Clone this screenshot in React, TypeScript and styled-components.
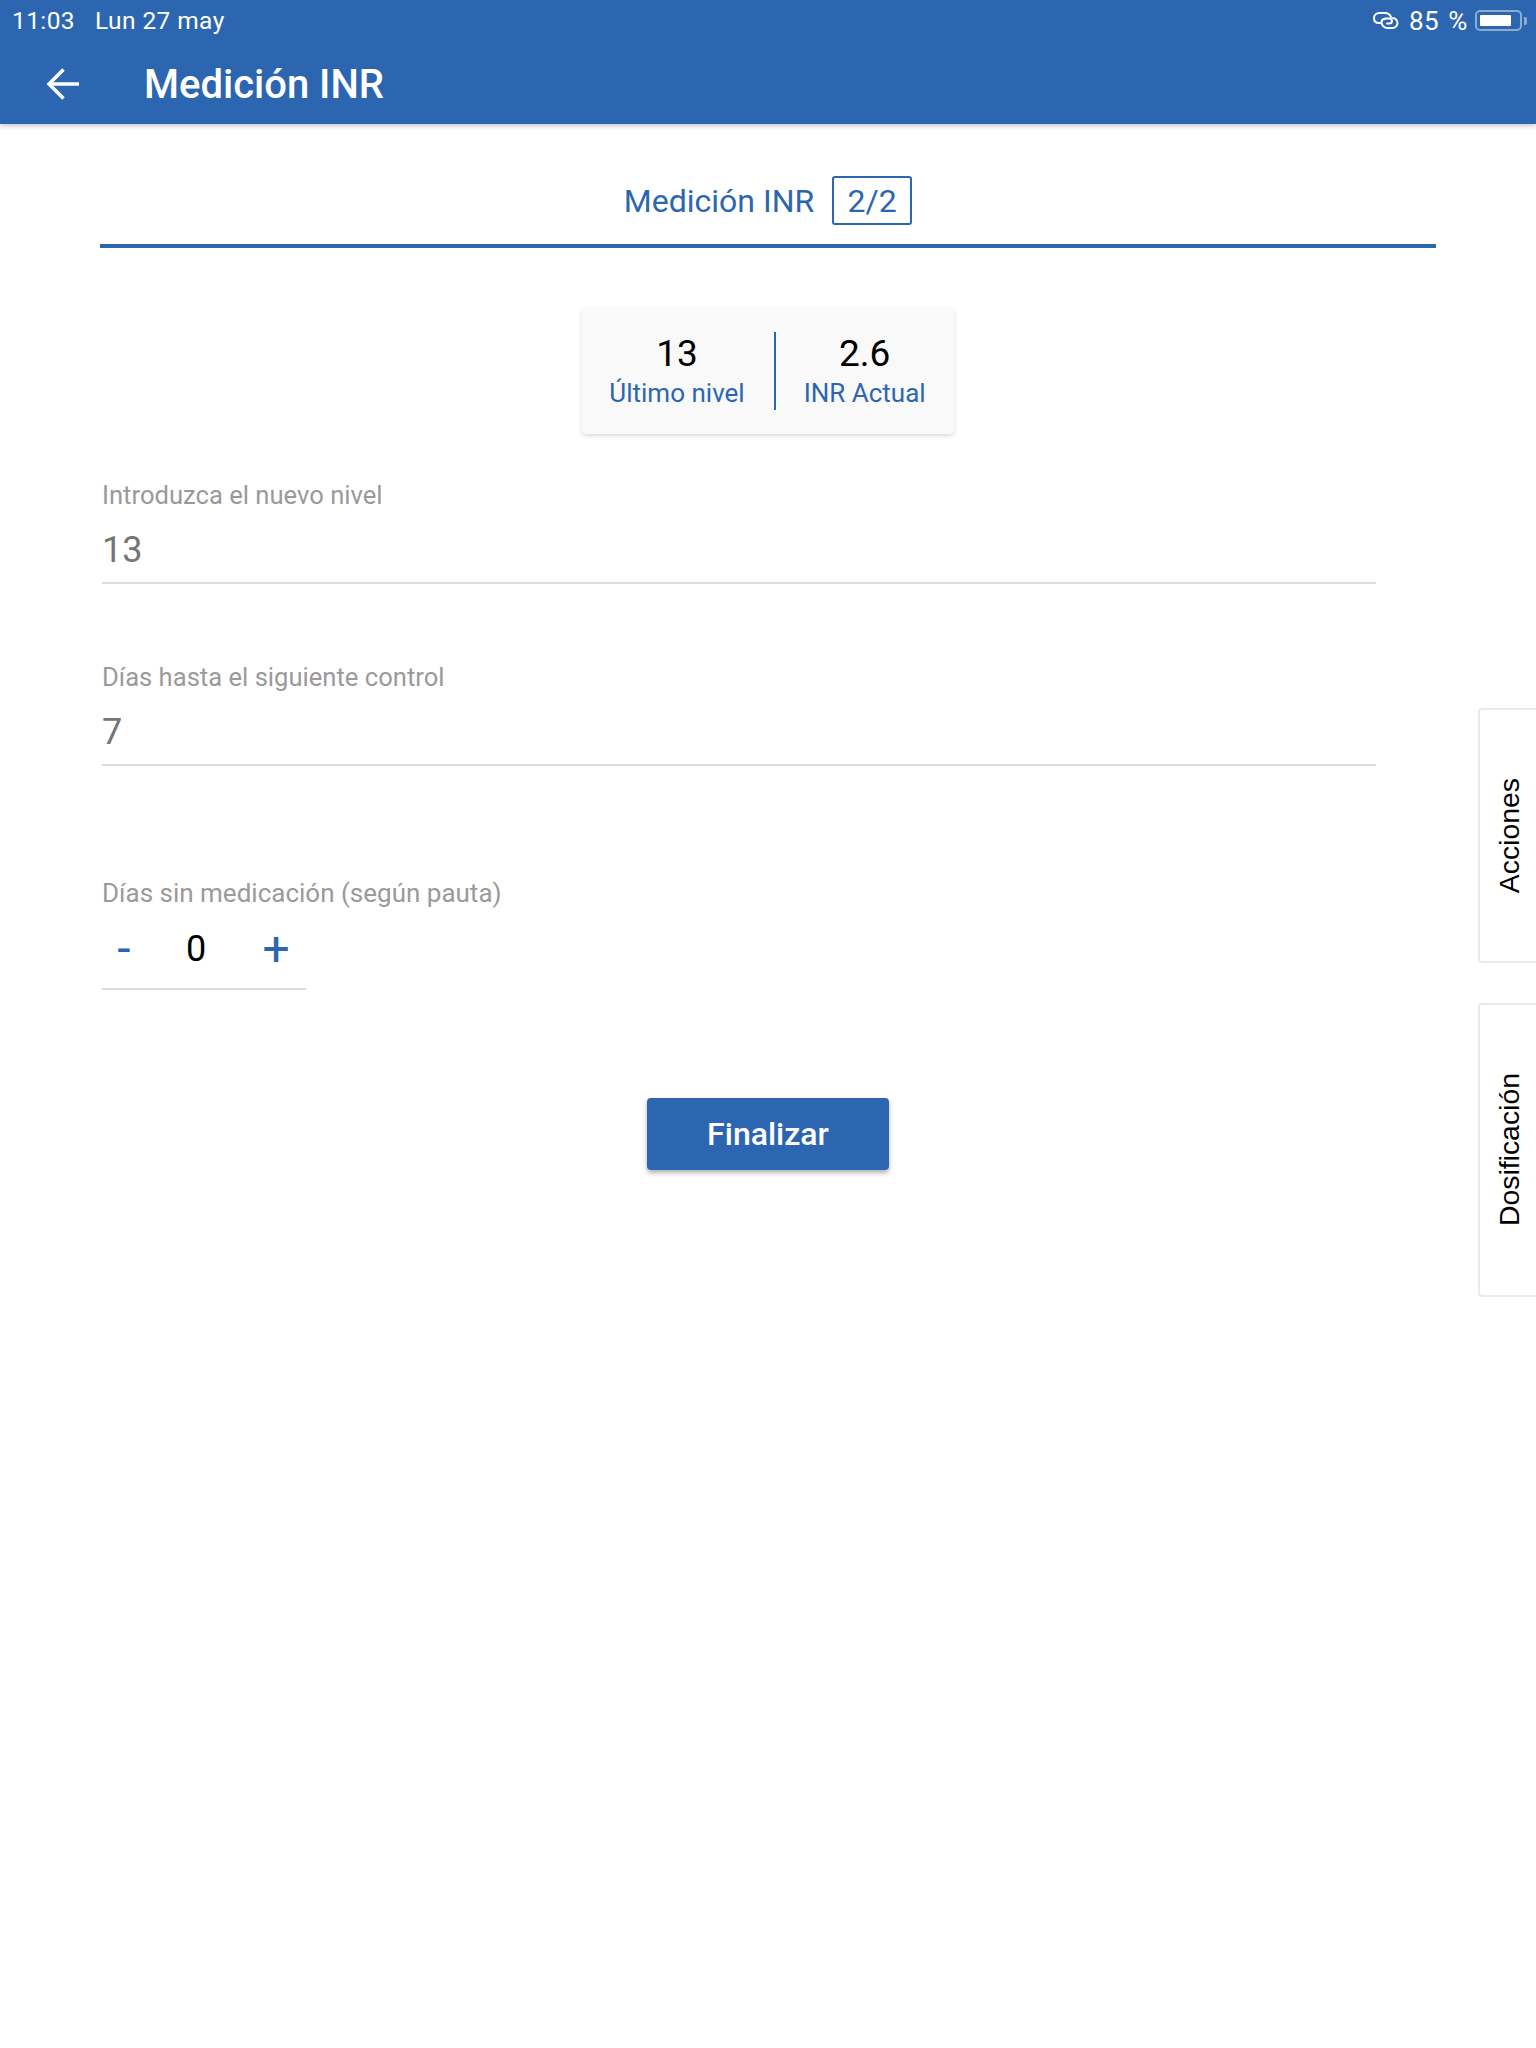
import styled, { createGlobalStyle } from 'styled-components';

const BLUE = '#2d66b0';

const GlobalStyle = createGlobalStyle`
  html, body {
    margin: 0;
    padding: 0;
    background: #fff;
    font-family: Roboto, "Liberation Sans", sans-serif;
  }
`

function StatusIcons() {
  return (
    <svg width="28" height="22" viewBox="0 0 28 22" fill="none" stroke="#fff" strokeWidth="2" strokeLinecap="round">
      <path d="M9 13H7C4 13 2 11 2 8s2.500-5 5-5h6c3 0 5 1.500 6 4" />
      <path d="M13 9c-2 0-3.500 1-3.500 3 0 3 2.500 6 6 6h5c3 0 5-2.500 5-5s-2-5-4.500-5" />
      <path d="M13 8.500h4c2 0 3 1 3 2.500s-1 2.500-3 2.500h-2" />
    </svg>
  )
}

function Battery() {
  return (
    <BatteryWrap>
      <BatteryBody><BatteryLevel style={{ width: '85%' }} /></BatteryBody>
      <BatteryTip />
    </BatteryWrap>
  )
}

export default function App() {
  return (
    <>
      <GlobalStyle />
      <Page>
        <Header>
          <StatusBar>
            <StatusGroup>
              <span>11:03</span>
              <span>Lun 27 may</span>
            </StatusGroup>
            <StatusRight>
              <StatusIcons />
              <span>85 %</span>
              <Battery />
            </StatusRight>
          </StatusBar>
          <TitleBar>
            <svg width="36" height="36" viewBox="0 0 36 36" fill="none" stroke="#fff" strokeWidth="3.500">
              <path d="M34 18H4" />
              <path d="M18.500 3.500 4 18l14.500 14.500" />
            </svg>
            <Title>Medición INR</Title>
          </TitleBar>
        </Header>

        <Content>
          <StepHeading>
            <StepTitle>Medición INR</StepTitle>
            <StepBadge>2/2</StepBadge>
          </StepHeading>

          <StatsCard>
            <Stat>
              <StatValue>13</StatValue>
              <StatLabel>Último nivel</StatLabel>
            </Stat>
            <StatDivider />
            <Stat>
              <StatValue>2.6</StatValue>
              <StatLabel>INR Actual</StatLabel>
            </Stat>
          </StatsCard>

          <Form>
            <Field>
              <FieldLabel>Introduzca el nuevo nivel</FieldLabel>
              <FieldValue>13</FieldValue>
            </Field>
            <Field>
              <FieldLabel>Días hasta el siguiente control</FieldLabel>
              <FieldValue>7</FieldValue>
            </Field>
            <CounterField>
              <FieldLabel $size={26}>Días sin medicación (según pauta)</FieldLabel>
              <Counter>
                <CounterButton>-</CounterButton>
                <CounterValue>0</CounterValue>
                <CounterButton>+</CounterButton>
              </Counter>
            </CounterField>
          </Form>

          <Actions>
            <PrimaryButton>Finalizar</PrimaryButton>
          </Actions>
        </Content>

        <SideTabs>
          <SideTab $height={255}><span>Acciones</span></SideTab>
          <SideTab $height={294}><span>Dosificación</span></SideTab>
        </SideTabs>
      </Page>
    </>
  )
}

const Page = styled.div`
  position: relative;
  min-height: 2048px;
  background: #fff;
  overflow: hidden;
`

const Header = styled.header`
  height: 124px;
  background: ${BLUE};
  color: #fff;
  box-shadow: 0 2px 5px rgba(0, 0, 0, 0.22);
`

const StatusBar = styled.div`
  height: 42px;
  box-sizing: border-box;
  padding: 0 9px 1px 12px;
  display: flex;
  align-items: center;
  justify-content: space-between;
  font-size: 24.5px;
  letter-spacing: 0.4px;
`

const StatusGroup = styled.div`
  display: flex;
  gap: 20px;
`

const StatusRight = styled.div`
  display: flex;
  align-items: center;
  gap: 7px;
  font-size: 26px;
  letter-spacing: 0.6px;
  word-spacing: 2px;

  svg {
    margin-right: 2px;
  }
`

const BatteryWrap = styled.div`
  display: flex;
  align-items: center;
  gap: 2px;
`

const BatteryBody = styled.div`
  width: 47px;
  height: 21px;
  box-sizing: border-box;
  padding: 3px;
  border: 2px solid rgba(255, 255, 255, 0.45);
  border-radius: 5px;
`

const BatteryLevel = styled.div`
  height: 100%;
  background: #fff;
  border-radius: 1px;
`

const BatteryTip = styled.div`
  width: 3px;
  height: 8px;
  background: rgba(255, 255, 255, 0.45);
  border-radius: 0 2px 2px 0;
`

const TitleBar = styled.div`
  height: 82px;
  padding: 2px 0 0 45px;
  box-sizing: border-box;
  display: flex;
  align-items: center;
  gap: 63px;
`

const Title = styled.h1`
  margin: 0;
  font-size: 40px;
  font-weight: 500;
`

const Content = styled.main`
  padding: 0 100px;
`

const StepHeading = styled.div`
  height: 124px;
  box-sizing: border-box;
  padding-top: 52px;
  display: flex;
  justify-content: center;
  align-items: flex-start;
  gap: 18px;
  border-bottom: 4px solid ${BLUE};
  color: ${BLUE};
`

const StepTitle = styled.span`
  font-size: 32px;
  line-height: 50px;
`

const StepBadge = styled.span`
  width: 80px;
  height: 49px;
  box-sizing: border-box;
  border: 2px solid ${BLUE};
  border-radius: 3px;
  display: flex;
  align-items: center;
  justify-content: center;
  font-size: 32px;
`

const StatsCard = styled.section`
  width: 372px;
  height: 126px;
  box-sizing: border-box;
  margin: 60px auto 0;
  padding: 25px 1px 23px 0;
  display: flex;
  align-items: stretch;
  justify-content: center;
  background: #f9f9fa;
  border-radius: 4px;
  box-shadow: 0 2px 4px rgba(0, 0, 0, 0.14);
`

const Stat = styled.div`
  display: flex;
  flex-direction: column;
  align-items: center;
`

const StatValue = styled.span`
  font-size: 37px;
  line-height: 42px;
  color: #000;
`

const StatLabel = styled.span`
  font-size: 26px;
  line-height: 36px;
  color: ${BLUE};
`

const StatDivider = styled.div`
  width: 2px;
  margin: -1px 28px 1px 29px;
  background: ${BLUE};
`

const Form = styled.div`
  margin-top: 46px;
  width: 1274px;
  margin-left: 2px;
`

const Field = styled.div`
  height: 182px;
`

const CounterField = styled.div`
  padding-top: 34px;
`

const FieldLabel = styled.div<{ $size?: number }>`
  font-size: ${(p) => p.$size ?? 25.6}px;
  line-height: 30px;
  color: #9a9a9a;
`

const FieldValue = styled.div`
  margin-top: 15px;
  height: 57px;
  border-bottom: 2px solid #dcdcdc;
  font-size: 36px;
  line-height: 50px;
  color: #757575;
`

const Counter = styled.div`
  margin-top: 10px;
  width: 204px;
  height: 72px;
  box-sizing: border-box;
  padding-bottom: 9px;
  display: flex;
  align-items: center;
  border-bottom: 2px solid #dcdcdc;
`

const CounterButton = styled.span`
  width: 44px;
  text-align: center;
  font-size: 48px;
  font-weight: 400;
  line-height: 50px;
  color: ${BLUE};
`

const CounterValue = styled.span`
  width: 100px;
  margin-right: 8px;
  text-align: center;
  font-size: 36px;
  color: #000;
`

const Actions = styled.div`
  margin-top: 108px;
  display: flex;
  justify-content: center;
`

const PrimaryButton = styled.button`
  width: 242px;
  height: 72px;
  border: none;
  border-radius: 4px;
  background: ${BLUE};
  color: #fff;
  font-family: inherit;
  font-size: 32px;
  font-weight: 500;
  box-shadow: 0 3px 5px rgba(0, 0, 0, 0.3);
`

const SideTabs = styled.aside`
  position: absolute;
  top: 708px;
  right: 0;
  display: flex;
  flex-direction: column;
  gap: 40px;
`

const SideTab = styled.div<{ $height: number }>`
  width: 58px;
  height: ${(p) => p.$height}px;
  box-sizing: border-box;
  padding-left: 2px;
  border: 2px solid #eaeaea;
  border-right: none;
  border-radius: 4px 0 0 4px;
  background: #fff;
  display: flex;
  align-items: center;
  justify-content: center;
  font-family: "Liberation Sans", Arial, sans-serif;
  font-size: 28.4px;
  color: #000;

  span {
    writing-mode: vertical-rl;
    transform: rotate(180deg);
  }
`
